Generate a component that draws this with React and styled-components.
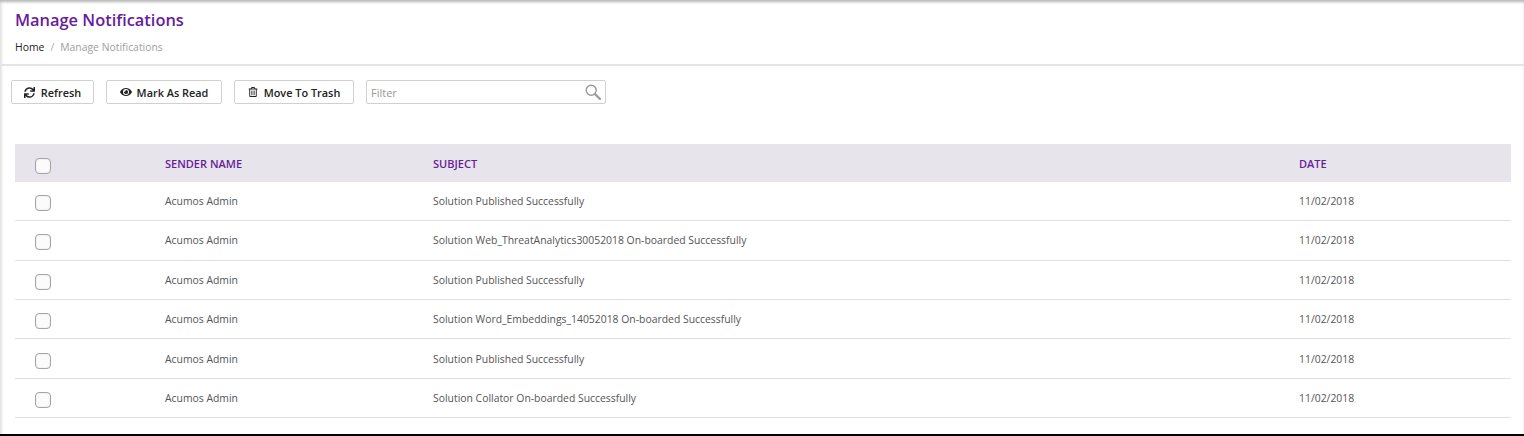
import React from "react";
import styled, { createGlobalStyle } from "styled-components";
import { FaSync, FaEye, FaRegTrashAlt } from "react-icons/fa";

const GlobalStyle = createGlobalStyle`
  html, body {
    margin: 0;
    padding: 0;
    background: #fff;
  }
  * {
    box-sizing: border-box;
  }
`;

const rows = [
  "Solution Published Successfully",
  "Solution Web_ThreatAnalytics30052018 On-boarded Successfully",
  "Solution Published Successfully",
  "Solution Word_Embeddings_14052018 On-boarded Successfully",
  "Solution Published Successfully",
  "Solution Collator On-boarded Successfully",
];

const SearchIcon = () => (
  <svg width="16" height="16" viewBox="0 0 16 16" fill="none" stroke="#999">
    <circle cx="6.2" cy="6.2" r="5" strokeWidth="1.4" />
    <path d="M10 10l5 5" strokeWidth="2.2" strokeLinecap="round" />
  </svg>
);

const App = () => {
  return (
    <Page>
      <GlobalStyle />
      <Header>
        <Title>Manage Notifications</Title>
        <Breadcrumb>
          <Crumb>Home</Crumb>
          <Separator>/</Separator>
          <CurrentCrumb>Manage Notifications</CurrentCrumb>
        </Breadcrumb>
      </Header>
      <Toolbar>
        <ToolButton $width={83}>
          <FaSync size={11} />
          Refresh
        </ToolButton>
        <ToolButton $width={116} $gap={5}>
          <FaEye size={12} />
          Mark As Read
        </ToolButton>
        <ToolButton $width={120} $gap={6}>
          <FaRegTrashAlt size={10} />
          Move To Trash
        </ToolButton>
        <FilterBox>
          <FilterInput placeholder="Filter" />
          <SearchIcon />
        </FilterBox>
      </Toolbar>
      <Table>
        <HeadRow>
          <HeadCheckBox />
          <HeadCell>SENDER NAME</HeadCell>
          <HeadCell>SUBJECT</HeadCell>
          <HeadCell>DATE</HeadCell>
        </HeadRow>
        {rows.map((subject, i) => (
          <Row key={i}>
            <CheckBox />
            <Cell>Acumos Admin</Cell>
            <Cell>{subject}</Cell>
            <Cell>11/02/2018</Cell>
          </Row>
        ))}
      </Table>
      <BottomBar />
    </Page>
  );
};

const Page = styled.div`
  display: flex;
  flex-direction: column;
  height: 436px;
  overflow: hidden;
  font-family: "Open Sans", "Liberation Sans", sans-serif;
  box-shadow: inset 0 3px 3px -1px #b5b5b5, inset 4px 0 4px -3px #ddd;
`;
const Header = styled.div`
  height: 66px;
  padding: 9px 15px 0;
  border-bottom: 2px solid #e4e4e4;
`;
const Title = styled.h1`
  margin: 0;
  font-size: 16.4px;
  line-height: 22px;
  font-weight: 600;
  color: #671c9d;
`;
const Breadcrumb = styled.div`
  display: flex;
  margin-top: 8px;
  font-size: 10.4px;
  line-height: 16px;
`;
const Crumb = styled.span`
  color: #222;
`;
const Separator = styled.span`
  margin: 0 6px;
  color: #aaa;
`;
const CurrentCrumb = styled.span`
  color: #a0a0a0;
`;
const Toolbar = styled.div`
  display: flex;
  gap: 12px;
  padding: 14px 0 0 11px;
  height: 78px;
`;
const ToolButton = styled.button`
  display: flex;
  align-items: center;
  justify-content: center;
  gap: ${(p) => p.$gap || 6}px;
  width: ${(p) => p.$width}px;
  height: 24px;
  padding: 0;
  background: #fff;
  border: 1px solid #d0d0d0;
  border-radius: 2px;
  font-family: inherit;
  font-size: 10.9px;
  font-weight: 600;
  color: #222;
`;
const FilterBox = styled.div`
  display: flex;
  align-items: center;
  width: 240px;
  height: 24px;
  padding: 0 4px 0 4px;
  border: 1px solid #d0d0d0;
  border-radius: 2px;
`;
const FilterInput = styled.input`
  flex: 1;
  min-width: 0;
  border: 0;
  padding: 0;
  outline: none;
  font-family: inherit;
  font-size: 11px;
  &::placeholder {
    color: #999;
  }
`;
const Table = styled.div`
  margin: 0 13px 0 15px;
`;
const HeadRow = styled.div`
  display: grid;
  grid-template-columns: 130px 268px 866px 1fr;
  align-items: center;
  height: 37.7px;
  padding-left: 20px;
  background: #e7e4eb;
`;
const Row = styled(HeadRow)`
  height: 39.45px;
  background: #fff;
  border-bottom: 1px solid #e0e0e0;
`;
const HeadCell = styled.div`
  padding-top: 1px;
  font-size: 11px;
  font-weight: 600;
  color: #671c9d;
`;
const Cell = styled.div`
  font-size: 10.4px;
  font-weight: 400;
  color: #555;
`;
const CheckBox = styled.span`
  display: block;
  width: 16px;
  height: 16px;
  margin-top: 4px;
  border: 1px solid #a5a5a5;
  border-radius: 4px;
  background: #fbfbfb;
  box-shadow: inset 0 0 2px #ddd;
`;
const HeadCheckBox = styled(CheckBox)`
  margin-top: 6px;
`;
const BottomBar = styled.div`
  height: 2px;
  margin-top: auto;
  background: #000;
`;

export default App;
